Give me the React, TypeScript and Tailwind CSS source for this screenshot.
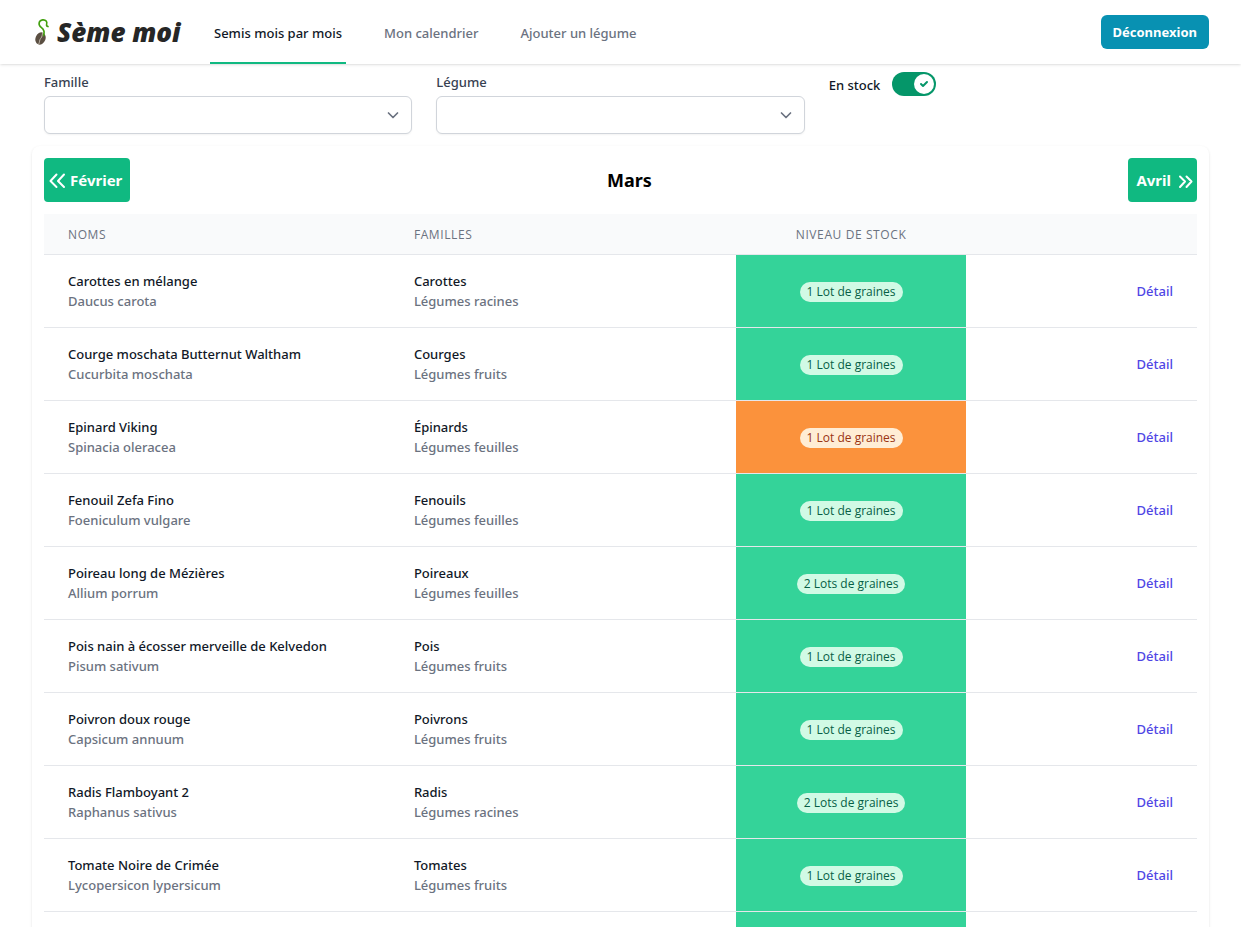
import { useState } from 'react';

interface Vegetable {
  name: string;
  latin: string;
  family: string;
  type: string;
  lots: number;
  low?: boolean;
}

const vegetables: Vegetable[] = [
  { name: 'Carottes en mélange', latin: 'Daucus carota', family: 'Carottes', type: 'Légumes racines', lots: 1 },
  { name: 'Courge moschata Butternut Waltham', latin: 'Cucurbita moschata', family: 'Courges', type: 'Légumes fruits', lots: 1 },
  { name: 'Epinard Viking', latin: 'Spinacia oleracea', family: 'Épinards', type: 'Légumes feuilles', lots: 1, low: true },
  { name: 'Fenouil Zefa Fino', latin: 'Foeniculum vulgare', family: 'Fenouils', type: 'Légumes feuilles', lots: 1 },
  { name: 'Poireau long de Mézières', latin: 'Allium porrum', family: 'Poireaux', type: 'Légumes feuilles', lots: 2 },
  { name: 'Pois nain à écosser merveille de Kelvedon', latin: 'Pisum sativum', family: 'Pois', type: 'Légumes fruits', lots: 1 },
  { name: 'Poivron doux rouge', latin: 'Capsicum annuum', family: 'Poivrons', type: 'Légumes fruits', lots: 1 },
  { name: 'Radis Flamboyant 2', latin: 'Raphanus sativus', family: 'Radis', type: 'Légumes racines', lots: 2 },
  { name: 'Tomate Noire de Crimée', latin: 'Lycopersicon lypersicum', family: 'Tomates', type: 'Légumes fruits', lots: 1 },
  { name: 'Tomate Rose de Berne', latin: 'Lycopersicon lypersicum', family: 'Tomates', type: 'Légumes fruits', lots: 1 },
];

const families = ['Carottes', 'Courges', 'Épinards', 'Fenouils', 'Poireaux', 'Pois', 'Poivrons', 'Radis', 'Tomates'];

const links = [
  { label: 'Semis mois par mois', active: true },
  { label: 'Mon calendrier', active: false },
  { label: 'Ajouter un légume', active: false },
];

const Logo = () => (
  <a href="#" className="flex w-[150px] shrink-0 items-center gap-2 pl-[3px] text-[#262626]">
    <svg className="shrink-0" width="14" height="28" viewBox="0 0 14 28" fill="none" aria-hidden="true">
      <ellipse cx="5.5" cy="20.5" rx="5" ry="6.3" transform="rotate(22 5.5 20.5)" fill="#5b4f42" />
      <path d="M8 14.5C6.8 17 7.6 18.5 5.6 20.5C4.3 22 4.8 24 3.6 26.5" stroke="#c9c0b4" strokeWidth="0.9" />
      <path d="M8.6 17.5C10 13.5 9.2 11.6 6.2 9.4C2.8 6.8 3.6 2.4 7.6 1.9C11 1.5 12.4 4 11.6 6.4C11.3 7.6 12 8.3 13 8.6" stroke="#43a010" strokeWidth="1.6" strokeLinecap="round" />
    </svg>
    <span className="text-[26px] leading-8 font-black whitespace-nowrap italic">Sème moi</span>
  </a>
);

const Select = ({ id, label, options }: { id: string; label: string; options: string[] }) => (
  <div>
    <label htmlFor={id} className="block leading-5 text-[#374151]">{label}</label>
    <div className="relative mt-1">
      <select id={id} className="block h-[38px] w-full appearance-none rounded-md border border-[#d1d5db] bg-white pr-10 pl-3 shadow-xs">
        <option value=""></option>
        {options.map((opt) => (
          <option key={opt} value={opt}>{opt}</option>
        ))}
      </select>
      <svg className="pointer-events-none absolute top-[9px] right-[9px] size-5 text-[#6b7280]" fill="none" stroke="currentColor" strokeWidth="1.7" strokeLinecap="round" strokeLinejoin="round" viewBox="0 0 20 20" aria-hidden="true">
        <path d="M5.500 8l4.500 4.500 4.500-4.500" />
      </svg>
    </div>
  </div>
);

const StockToggle = () => {
  const [inStock, setInStock] = useState(true);

  return (
    <label className="flex cursor-pointer items-start gap-3">
      <span className="pt-[3px] leading-5 text-[#111827]">En stock</span>
      <input type="checkbox" checked={inStock} onChange={(e) => setInStock(e.target.checked)} className="peer sr-only" />
      <span className="flex h-6 w-11 justify-start rounded-full bg-gray-200 p-0.5 peer-checked:justify-end peer-checked:bg-[#059669]">
        <span className="flex size-5 items-center justify-center rounded-full bg-white">
          {inStock && (
            <svg className="size-3 text-[#059669]" fill="currentColor" viewBox="0 0 12 12">
              <path d="M3.707 5.293a1 1 0 00-1.414 1.414l1.414-1.414zM5 8l-.707.707a1 1 0 001.414 0L5 8zm4.707-3.293a1 1 0 00-1.414-1.414l1.414 1.414zm-7.414 2l2 2 1.414-1.414-2-2-1.414 1.414zm3.414 2l4-4-1.414-1.414-4 4 1.414 1.414z" />
            </svg>
          )}
        </span>
      </span>
    </label>
  );
};

const Chevrons = ({ direction }: { direction: 'left' | 'right' }) => (
  <svg className="size-5" fill="none" stroke="currentColor" strokeWidth="2" strokeLinecap="round" strokeLinejoin="round" viewBox="0 0 20 20" aria-hidden="true">
    <path d={direction === 'left' ? 'M8.5 4.500L2.500 11L8.500 17M16 4.500L10 11L16 17' : 'M5 6.500L10 11.500L5 17M11.500 6.500L16.500 11.500L11.500 17'} />
  </svg>
);

export default function App() {
  return (
    <div className="min-h-screen bg-white font-['Noto_Sans',sans-serif] text-[13px] leading-5 font-medium">
      {/* Navigation */}
      <nav className="flex h-16 items-stretch justify-between px-8 shadow-sm">
        <div className="flex gap-7">
          <Logo />
          <div className="flex gap-[34px]">
            {links.map((link) => (
              <a
                key={link.label}
                href="#"
                className={`flex items-center border-b-2 px-1 pt-1 whitespace-nowrap ${link.active ? 'border-[#10b981] text-[#111827]' : 'border-transparent text-[#6b7280] hover:text-gray-700'}`}
              >
                {link.label}
              </a>
            ))}
          </div>
        </div>
        <button className="my-auto h-[34px] rounded-md bg-[#0891b2] px-3 font-bold text-white hover:bg-[#0e7490]">
          Déconnexion
        </button>
      </nav>

      <main className="px-8">
        {/* Filters */}
        <div className="grid grid-cols-3 gap-6 px-3 pt-2 pb-3">
          <Select id="famille" label="Famille" options={families} />
          <Select id="legume" label="Légume" options={vegetables.map((v) => v.name)} />
          <StockToggle />
        </div>

        {/* Month */}
        <section className="rounded-lg bg-white p-3 shadow-sm">
          <div className="mb-3 flex items-center justify-between">
            <button className="flex h-11 items-center gap-0.5 rounded bg-[#10b981] pr-2 pl-1 text-[15px] font-bold text-white">
              <Chevrons direction="left" />
              Février
            </button>
            <h1 className="text-lg font-bold text-black">Mars</h1>
            <button className="flex h-11 items-center gap-1 rounded bg-[#10b981] pr-0.5 pl-2 text-[15px] font-bold text-white">
              Avril
              <Chevrons direction="right" />
            </button>
          </div>

          <table className="w-full table-fixed text-left">
            <thead className="bg-[#f9fafb] font-['Open_Sans',sans-serif] text-xs tracking-wider text-[#6b7280] uppercase">
              <tr className="h-10">
                <th scope="col" className="w-[30%] px-6 pt-0.5 font-normal">Noms</th>
                <th scope="col" className="w-[30%] px-6 pt-0.5 font-normal">Familles</th>
                <th scope="col" className="w-[20%] px-6 pt-0.5 text-center font-normal">Niveau de stock</th>
                <th scope="col" className="w-[20%] px-6" aria-label="Détail"></th>
              </tr>
            </thead>
            <tbody>
              {vegetables.map((v) => (
                <tr key={v.name} className="h-[73px] border-t border-[#e5e7eb] whitespace-nowrap">
                  <td className="px-6">
                    <div className="text-[#111827]">{v.name}</div>
                    <div className="text-[#6b7280]">{v.latin}</div>
                  </td>
                  <td className="px-6">
                    <div className="text-[#111827]">{v.family}</div>
                    <div className="text-[#6b7280]">{v.type}</div>
                  </td>
                  <td className={`px-6 pt-0.5 text-center ${v.low ? 'bg-[#fb923c]' : 'bg-[#34d399]'}`}>
                    <span className={`inline-flex rounded-full px-[7px] font-['Open_Sans',sans-serif] text-xs leading-5 font-normal ${v.low ? 'bg-[#ffedd5] text-[#9a3412]' : 'bg-[#d1fae5] text-[#065f46]'}`}>
                      {v.lots} {v.lots > 1 ? 'Lots' : 'Lot'} de graines
                    </span>
                  </td>
                  <td className="px-6 text-right">
                    <a href="#" className="text-[#4f46e5] hover:text-[#312e81]">Détail</a>
                  </td>
                </tr>
              ))}
            </tbody>
          </table>
        </section>
      </main>
    </div>
  );
}
